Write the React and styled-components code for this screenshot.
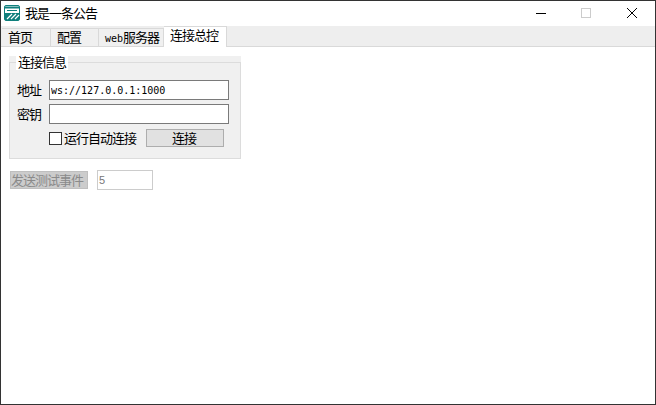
import React from 'react';
import styled, { createGlobalStyle } from 'styled-components';

const GlobalStyle = createGlobalStyle`
  html, body {
    margin: 0;
    padding: 0;
    background: #fff;
  }
`;

const cjk = `"Noto Sans CJK SC", "Liberation Sans", sans-serif`;

const Window = styled.div`
  width: 656px;
  height: 405px;
  box-sizing: border-box;
  border: 1px solid #333;
  background: #fff;
  display: flex;
  flex-direction: column;
  overflow: hidden;
  font-family: ${cjk};
  font-size: 13px;
  letter-spacing: -1px;
  color: #000;
`;

const TitleBar = styled.div`
  height: 25px;
  display: flex;
  align-items: flex-start;
  padding-left: 3px;
  flex-shrink: 0;
`;

const AppIconWrap = styled.div`
  height: 16px;
  margin-top: 4px;
`;

const AppTitle = styled.span`
  margin-left: 5px;
  line-height: 23px;
  flex: 1;
`;

const WinButton = styled.div`
  width: ${p => p.$w}px;
  height: 24px;
  display: flex;
  align-items: center;
  justify-content: center;
`;

const TabStrip = styled.div`
  height: 21px;
  background: #eee;
  display: flex;
  align-items: flex-end;
  flex-shrink: 0;
  border-bottom: 1px solid #d9d9d9;
  box-sizing: border-box;
  padding-left: 1px;
`;

const Tab = styled.div`
  width: ${p => p.$w}px;
  height: ${p => (p.$active ? 21 : 18)}px;
  box-sizing: border-box;
  background: ${p => (p.$active ? '#fff' : '#f0f0f0')};
  border-right: 1px solid #d9d9d9;
  border-top: 1px solid #d9d9d9;
  margin-bottom: ${p => (p.$active ? -1 : 0)}px;
  padding-left: 6px;
  line-height: 16px;
  white-space: nowrap;
`;

const Mono = styled.span`
  font-family: "DejaVu Sans Mono", monospace;
  font-size: 10px;
  letter-spacing: 0;
`;

const Content = styled.div`
  padding: 9px 0 0 8px;
  display: flex;
  flex-direction: column;
  align-items: flex-start;
`;

const Group = styled.div`
  width: 232px;
  height: 103px;
  box-sizing: border-box;
  background: #f0f0f0;
  position: relative;
  padding: 24px 11px 0 8px;
  display: flex;
  flex-direction: column;
  gap: 4px;
  &::before {
    content: '';
    position: absolute;
    inset: 6px 0 0 0;
    border: 1px solid #dcdcdc;
    pointer-events: none;
  }
`;

const Legend = styled.div`
  position: absolute;
  left: 7px;
  top: 0;
  height: 14px;
  width: 52px;
  box-sizing: border-box;
  line-height: 12px;
  padding: 0 0 0 2px;
  background: #fff;
  z-index: 1;
`;

const Row = styled.div`
  display: flex;
  align-items: center;
  height: 20px;
`;

const FieldLabel = styled.label`
  width: 32px;
  flex-shrink: 0;
  padding-bottom: 2px;
`;

const TextInput = styled.input`
  width: 180px;
  height: 20px;
  box-sizing: border-box;
  border: 1px solid #7a7a7a;
  background: #fff;
  padding: 0 1px;
  font-family: "DejaVu Sans Mono", monospace;
  font-size: 10px;
  letter-spacing: 0;
  color: #000;
  outline: none;
`;

const CheckRow = styled.div`
  display: flex;
  align-items: center;
  height: 20px;
  padding-left: 32px;
`;

const CheckBox = styled.span`
  width: 13px;
  height: 13px;
  box-sizing: border-box;
  border: 1px solid #333;
  background: #fff;
  flex-shrink: 0;
`;

const CheckText = styled.span`
  margin-left: 2px;
  width: 82px;
  white-space: nowrap;
  padding-bottom: 2px;
`;

const PushButton = styled.div`
  width: 78px;
  height: 18px;
  box-sizing: border-box;
  border: 1px solid #adadad;
  background: #e1e1e1;
  text-align: center;
  line-height: 16px;
  padding-right: 2px;
`;

const TestRow = styled.div`
  display: flex;
  align-items: center;
  margin-top: 11px;
  margin-left: 1px;
`;

const DisabledButton = styled.div`
  width: 78px;
  height: 18px;
  background: #ccc;
  border: 1px solid #bfbfbf;
  box-sizing: border-box;
  color: #8a8a8a;
  line-height: 15px;
  white-space: nowrap;
`;

const NumberBox = styled.div`
  width: 56px;
  height: 20px;
  margin-left: 9px;
  box-sizing: border-box;
  border: 1px solid #ccc;
  color: #777;
  font-family: "Liberation Sans", sans-serif;
  font-size: 11px;
  letter-spacing: 0;
  line-height: 18px;
  padding-left: 1px;
`;

function AppIcon() {
  return (
    <svg width="16" height="16" viewBox="0 0 16 16" style={{ display: 'block' }}>
      <rect x="0.5" y="0.5" width="15" height="15" rx="1.5" fill="#fff" stroke="#0f7f7c" />
      <path d="M1 2.5h14" stroke="#0f7f7c" strokeWidth="2" />
      <path d="M3 5.5h10" stroke="#0f7f7c" />
      <path d="M1 15V8h14v7z" fill="#0f7f7c" />
      <path d="M3 14l5-5M7 14l5-5M11 14l4-4" stroke="#fff" strokeWidth="1.2" fill="none" />
    </svg>
  );
}

export default function App() {
  return (
    <>
      <GlobalStyle />
      <Window>
        <TitleBar>
          <AppIconWrap><AppIcon /></AppIconWrap>
          <AppTitle>我是一条公告</AppTitle>
          <WinButton $w={44}>
            <svg width="10" height="10" viewBox="0 0 10 10"><path d="M0 5.5h10" stroke="#000" /></svg>
          </WinButton>
          <WinButton $w={46}>
            <svg width="10" height="10" viewBox="0 0 10 10"><rect x="0.5" y="0.5" width="9" height="9" fill="none" stroke="#ccc" /></svg>
          </WinButton>
          <WinButton $w={46}>
            <svg width="10" height="10" viewBox="0 0 10 10"><path d="M0 0l10 10M10 0l-10 10" stroke="#000" /></svg>
          </WinButton>
        </TitleBar>
        <TabStrip>
          <Tab $w={49}>首页</Tab>
          <Tab $w={48}>配置</Tab>
          <Tab $w={65}><Mono>web</Mono>服务器</Tab>
          <Tab $w={63} $active>连接总控</Tab>
        </TabStrip>
        <Content>
          <Group>
            <Legend>连接信息</Legend>
            <Row>
              <FieldLabel>地址</FieldLabel>
              <TextInput readOnly value="ws://127.0.0.1:1000" />
            </Row>
            <Row>
              <FieldLabel>密钥</FieldLabel>
              <TextInput readOnly value="" />
            </Row>
            <CheckRow>
              <CheckBox />
              <CheckText>运行自动连接</CheckText>
              <PushButton>连接</PushButton>
            </CheckRow>
          </Group>
          <TestRow>
            <DisabledButton>发送测试事件</DisabledButton>
            <NumberBox>5</NumberBox>
          </TestRow>
        </Content>
      </Window>
    </>
  );
}
